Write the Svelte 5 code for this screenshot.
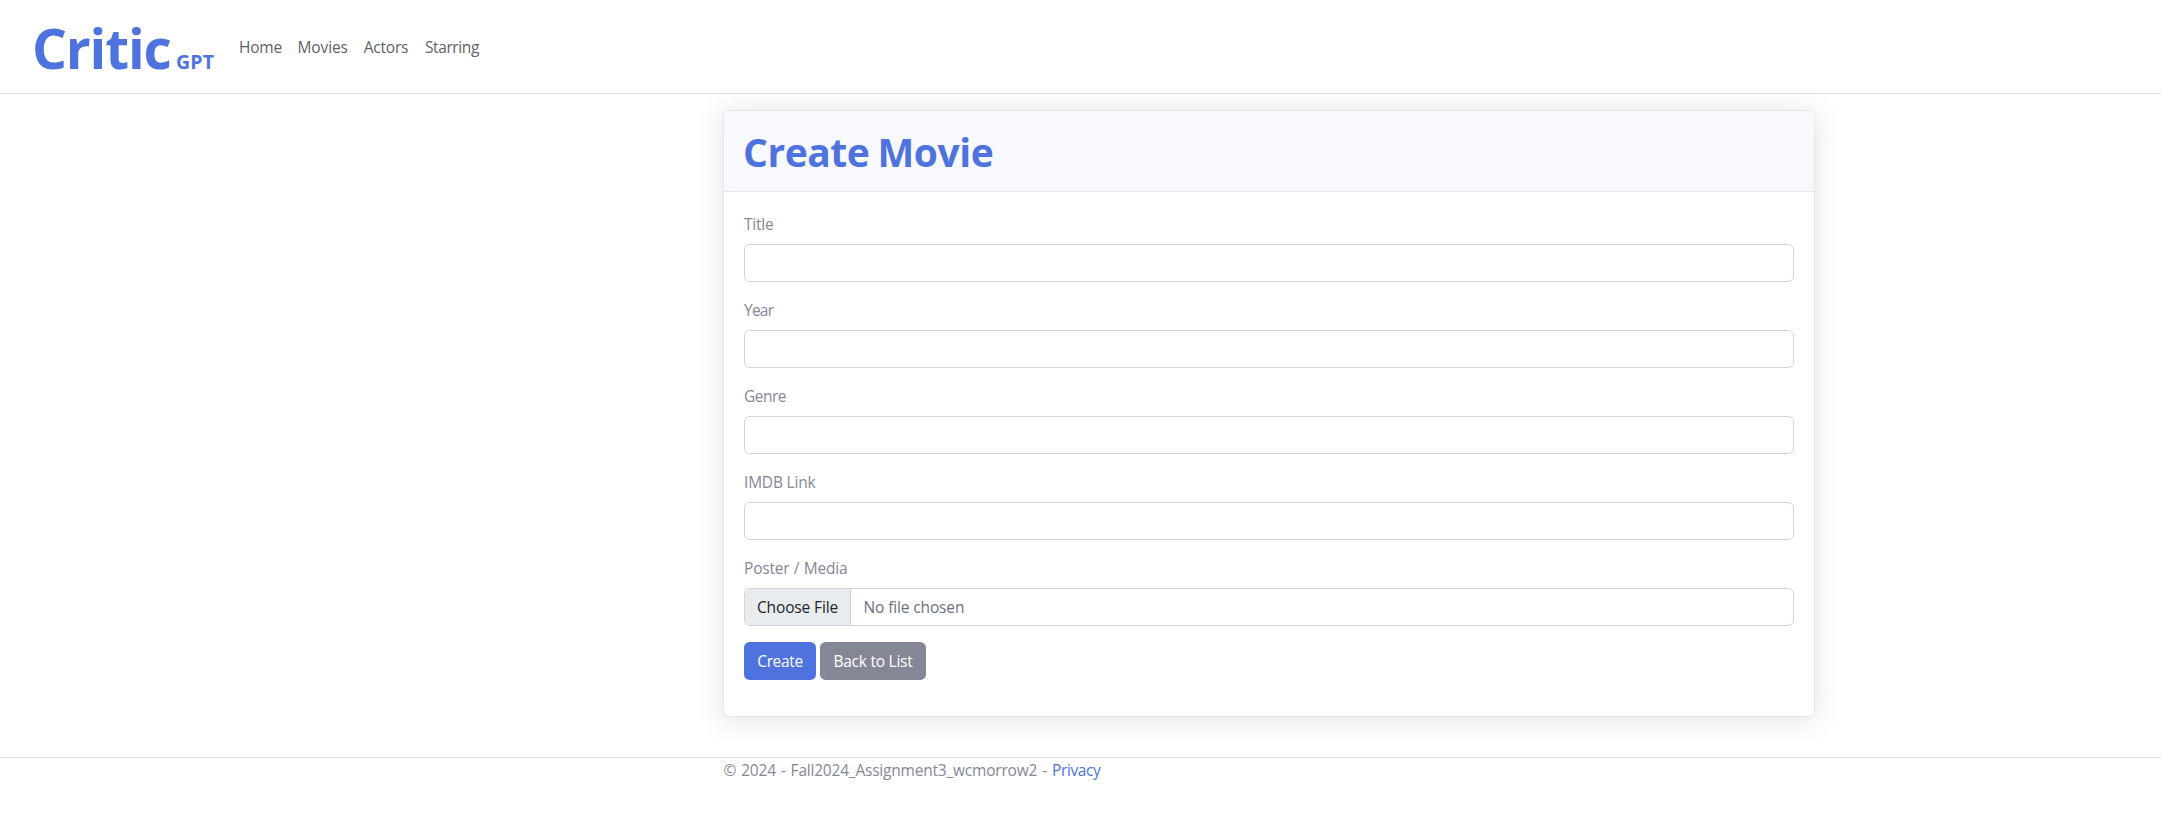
<script>
  const nav = [
    { label: 'Home', width: 58.5, track: -0.22 },
    { label: 'Movies', width: 66.2, track: -0.1 },
    { label: 'Actors', width: 61.3, track: -0.2 },
    { label: 'Starring', width: 72, track: -0.4 },
  ];
  const fields = [
    { id: 'title', label: 'Title', track: -0.2 },
    { id: 'year', label: 'Year', track: -0.75 },
    { id: 'genre', label: 'Genre', track: -0.5 },
    { id: 'imdb', label: 'IMDB Link', track: -0.2 },
  ];
</script>

<header>
  <a class="brand" href="#home"><span class="critic">Critic</span><span class="gpt">GPT</span></a>
  <nav>
    {#each nav as item}
      <a href="#{item.label}" style:width="{item.width}px" style:letter-spacing="{item.track}px">{item.label}</a>
    {/each}
  </nav>
</header>

<main>
  <section class="card">
    <div class="card-header"><h1>Create Movie</h1></div>
    <form class="card-body">
      {#each fields as field}
        <div class="group">
          <label for={field.id} style:letter-spacing="{field.track}px">{field.label}</label>
          <input id={field.id} type="text" />
        </div>
      {/each}
      <div class="group">
        <span class="label poster">Poster / Media</span>
        <div class="file">
          <span class="choose">Choose File</span>
          <span class="chosen">No file chosen</span>
        </div>
      </div>
      <div class="actions">
        <button type="button" class="create">Create</button>
        <button type="button" class="back">Back to List</button>
      </div>
    </form>
  </section>
</main>

<footer><span class="copy">© 2024 - Fall2024_Assignment3_wcmorrow2 -</span><a href="#privacy">Privacy</a></footer>

<style>
  :global(body) {
    background: #fff;
    color: #858796;
    font: 400 15.5px/24px "Open Sans", "Noto Sans", sans-serif;
  }
  a { color: #4e73df; text-decoration: none; }
  header {
    box-sizing: border-box;
    height: 94px;
    padding-left: 32px;
    display: flex;
    align-items: center;
    border-bottom: 1px solid #dee2e6;
  }
  .brand {
    display: flex;
    align-items: baseline;
    width: 199px;
    padding-top: 3px;
    font-weight: 700;
  }
  .critic { width: 144px; font-size: 55px; line-height: 84px; letter-spacing: -1.2px; }
  .gpt { font-size: 19.5px; line-height: 20px; letter-spacing: 0.2px; }
  nav { display: flex; }
  nav a { box-sizing: border-box; padding: 8px 0 8px 8px; white-space: nowrap; color: #5f6164; }
  main { padding: 16px 346px 0 723px; }
  .card {
    border: 1px solid #e3e6f0;
    border-radius: 5.6px;
    background: #fff;
    box-shadow: 0 2.4px 28px rgba(58, 59, 69, 0.15);
  }
  .card-header {
    padding: 17px 20px 15px;
    background: #f8f9fc;
    border-bottom: 1px solid #e3e6f0;
    border-radius: 4.6px 4.6px 0 0;
  }
  h1 {
    margin: 0 0 0 -1px;
    color: #4e73df;
    font-size: 39px;
    line-height: 48px;
    font-weight: 700;
    letter-spacing: -0.45px;
    word-spacing: -1.6px;
  }
  .card-body { padding: 20px; }
  .group { margin-bottom: 16px; }
  label, .label { display: block; margin-bottom: 8px; }
  .poster { letter-spacing: -0.18px; word-spacing: 0.5px; }
  input, .file {
    display: block;
    box-sizing: border-box;
    width: 100%;
    height: 38px;
    border: 1px solid #d1d3e2;
    border-radius: 5.6px;
    background: #fff;
    font: inherit;
  }
  input { padding: 6px 12px; outline: 0; }
  .file { display: flex; overflow: hidden; color: #6e707e; }
  .choose {
    box-sizing: border-box;
    width: 106px;
    padding: 6px 0 6px 12px;
    background: #e9ecef;
    border-right: 1px solid #d1d3e2;
    color: #212529;
    letter-spacing: -0.14px;
  }
  .chosen { padding: 6px 0 6px 12.5px; letter-spacing: -0.13px; }
  .actions { display: flex; gap: 4px; margin-bottom: 16px; }
  button {
    height: 38px;
    padding: 0;
    border: 0;
    border-radius: 5.6px;
    color: #fff;
    font: inherit;
    white-space: nowrap;
  }
  .create { width: 72px; background: #4e73df; letter-spacing: -0.35px; }
  .back { width: 106px; background: #858796; letter-spacing: -0.25px; }
  footer {
    display: flex;
    margin-top: 40px;
    padding-left: 723.5px;
    border-top: 1px solid #dee2e6;
    white-space: nowrap;
  }
  .copy { width: 328.5px; letter-spacing: -0.21px; word-spacing: 1.2px; }
  footer a { letter-spacing: -0.38px; }
</style>
